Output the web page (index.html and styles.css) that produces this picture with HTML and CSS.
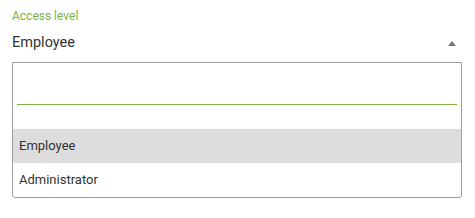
FILE: index.html
```html
<!DOCTYPE html>
<html>
<head>
<meta charset="utf-8">
<link rel="stylesheet" href="styles.css">
</head>
<body>
<div class="field">
  <div class="label">Access level</div>
  <div class="select">
    <span class="value">Employee</span>
    <svg class="arrow" width="8" height="5" viewBox="0 0 8 5"><polygon points="4,0 8,5 0,5" fill="#777"/></svg>
  </div>
  <div class="dropdown">
    <div class="search"><div class="search-line"></div></div>
    <div class="option active">Employee</div>
    <div class="option">Administrator</div>
  </div>
</div>
</body>
</html>
```
FILE: styles.css
```css
html, body {
  margin: 0;
  padding: 0;
  background: #fff;
}
body {
  font-family: Roboto, "Liberation Sans", sans-serif;
}
.field {
  width: 450px;
  margin-left: 12px;
  padding-top: 9px;
}
.label {
  font-size: 12px;
  line-height: 14px;
  color: #7cb342;
}
.select {
  display: flex;
  align-items: center;
  justify-content: space-between;
  height: 39px;
  padding-right: 6px;
}
.value {
  font-size: 14.5px;
  color: #333;
}
.arrow {
  display: block;
  margin-top: 1px;
}
.dropdown {
  border: 1px solid #9e9e9e;
  border-radius: 0 0 3px 3px;
  height: 134px;
}
.search {
  height: 66px;
  padding: 0 4px;
  box-sizing: border-box;
  display: flex;
  flex-direction: column;
  justify-content: flex-start;
}
.search-line {
  margin-top: 41px;
  height: 1px;
  background: #7cb342;
}
.option {
  height: 34px;
  line-height: 34px;
  padding-left: 6px;
  font-size: 13px;
  color: #333;
}
.option.active {
  background: #dddddd;
}
```
